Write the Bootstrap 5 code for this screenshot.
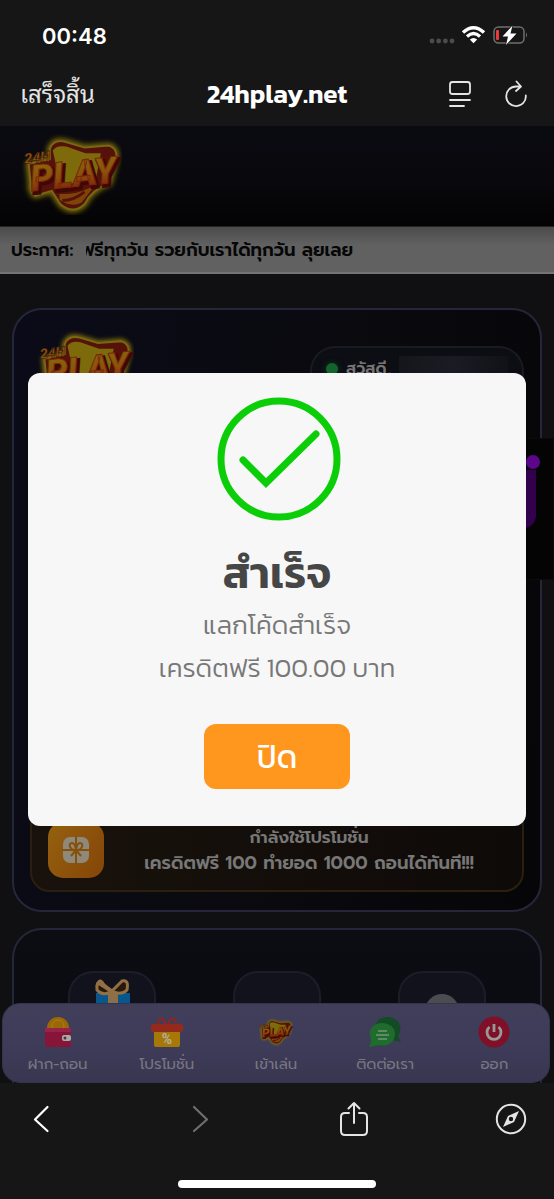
<!DOCTYPE html>
<html lang="th">
<head>
<meta charset="utf-8">
<meta name="viewport" content="width=device-width, initial-scale=1">
<title>24hplay.net</title>
<link href="https://cdn.jsdelivr.net/npm/bootstrap@5.3.0/dist/css/bootstrap.min.css" rel="stylesheet">
<style>
body{background:#161616;color:#fff;font-family:Prompt,Kanit,"Noto Sans Thai","Noto Sans",sans-serif;font-size:18px;line-height:26px}
button{font-family:inherit}
.plain-btn{background:none;border:0;padding:0;color:#e4e4e4;line-height:1}
.clock{font:600 22px/28px Inter,sans-serif}
.status-bar{padding:22px 26px 0 42px;height:62px}
.url-bar{padding:0 26px 0 20px;height:64px}
.url-tools{gap:28px}
.done-btn{font-family:"Noto Sans Thai Looped",Sarabun,"Noto Serif Thai",Loma,Waree,sans-serif;font-size:24px;line-height:32px;padding-bottom:4px}
.site-name{font-family:Kanit,Prompt,sans-serif;font-size:26px;line-height:32px;font-weight:600}
.site{background:#101012;min-height:0}
.site-head{height:100px;padding:8px 22px;background:linear-gradient(#0a0a11,#08080c 60%,#030304)}
.news{height:48px;padding:0 11px;gap:13px;background:linear-gradient(#4b4b4b,#616161 40%,#616161);border-top:1px solid #222;border-bottom:2px solid #747474;color:#060606;font-weight:600;overflow:hidden;white-space:nowrap}
.news-run{text-indent:-6px}
.panels{gap:16px;padding-top:34px}
.panel-box{border:2px solid #26263a;border-radius:30px}
.account{min-height:604px;padding:20px 16px 18px;background:linear-gradient(100deg,#0a0b18,#0a0a10 45%,#060608)}
.games{flex:0 0 300px;padding:41px 54px;background:linear-gradient(#0c0c13,#08080f)}
.greet{width:214px;height:44px;margin-top:16px;padding:0 14px;border:2px solid #1a1a22;border-bottom:0;border-radius:25px 25px 0 0;background:#0d0d14;color:#767676;font-weight:600;font-size:16px}
.online{width:12px;height:12px;border-radius:50%;background:#15642f;box-shadow:0 0 6px #0c3d1d}
.masked{height:26px;background:linear-gradient(90deg,#15151c,#1b1b23 50%,#111118)}
.promo{padding:14px 16px 12px;border:2px solid #2b1f10;border-radius:20px;background:linear-gradient(90deg,#19120c,#0e0a08);color:#777}
.promo-icon{width:56px;height:56px;border-radius:15px;background:linear-gradient(120deg,#95610f,#854508)}
.promo strong{font-size:17px;font-weight:600}
.tile{width:88px;height:88px;border:2px solid #1d1d2a;border-radius:25px;background:#12121c;overflow:hidden}
.contact-tab{right:0;top:312px;width:32px;height:142px;background:#040405;border:1px solid #0b0b0c}
.tabs{left:2px;right:4px;bottom:0;height:80px;border:1px solid #35344d;border-radius:18px;background:linear-gradient(#403e59,#3e3c59 50%,#383650);font-size:15px;line-height:20px}
.tabs a{color:#777681;text-decoration:none;padding-top:12px;gap:6px}
.dialog-layer{padding:0 28px 10px;z-index:5}
.dialog-box{font-family:Kanit,Prompt,sans-serif;background:#f7f7f7;border-radius:12px;padding:24px 24px 37px}
.dialog-box h1{font-size:44px;line-height:60px;color:#464646;font-weight:600;margin:22px 0 0}
.dialog-box p{font-size:26px;line-height:43px;color:#777;font-weight:300;margin:0}
.close-btn{width:146px;height:65px;margin-top:35px;border:0;border-radius:12px;background:#ff961d;color:#fff;font-size:32px;line-height:40px}
.browser-bar{height:116px;padding:18px 0 11px}
.browser-tools{padding:0 26px 0 32px}
.home-line{width:198px;height:8px;border-radius:4px;background:#fff}
svg{display:block;flex:none}
</style>
</head>
<body class="vh-100 d-flex flex-column overflow-hidden">
<svg width="0" height="0" class="position-absolute" aria-hidden="true">
<defs>
<filter id="glow" x="-20%" y="-20%" width="140%" height="140%"><feGaussianBlur stdDeviation="2.5"/></filter>
<linearGradient id="gold" x2="0" y2="1"><stop stop-color="#83700b"/><stop offset=".55" stop-color="#8a500b"/><stop offset="1" stop-color="#721309"/></linearGradient>
<symbol id="logo" viewBox="0 0 104 84">
<path d="M29 15Q33 5 45 8L65 14L90 12Q101 15 97 29L91 51Q72 58 65 73Q53 84 40 73L31 59L14 64Q8 61 9 51L7 31L29 26Z" fill="none" stroke="#7d6b0c" stroke-width="6" filter="url(#glow)"/>
<path d="M29 15Q33 5 45 8L65 14L90 12Q101 15 97 29L91 51Q72 58 65 73Q53 84 40 73L31 59L14 64Q8 61 9 51L7 31L29 26Z" fill="#56120a" stroke="#77690f" stroke-width="2"/>
<path d="M32 17Q36 11 46 13L66 20L82 20L76 51L40 53Z" fill="#7d6b0b"/>
<path d="M39 62Q55 64 77 52L62 71Q51 77 39 68Z" fill="#7c4509"/>
<path d="M42 69Q54 69 65 60M38 60Q57 64 78 49" fill="none" stroke="#5a1108" stroke-width="3"/>
<g font-family="Roboto,sans-serif" font-weight="900" font-style="italic" transform="rotate(-6 50 40)">
<text x="10" y="58" font-size="38" fill="#400707" stroke="#400707" stroke-width="3">PLAY</text>
<text x="8" y="55" font-size="38" fill="url(#gold)" stroke="#7d250a">PLAY</text>
<text x="4" y="26" font-size="15" fill="#8a510f" stroke="#35100a" stroke-width=".5">24H</text>
</g>
</symbol>
</defs>
</svg>

<header class="flex-shrink-0">
<div class="status-bar d-flex justify-content-between">
<span class="clock">00:48</span>
<svg width="100" height="28" viewBox="0 0 100 28">
<g fill="#4c4c4c"><circle cx="4" cy="19" r="2.4"/><circle cx="10.700" cy="19" r="2.400"/><circle cx="17.400" cy="19" r="2.400"/><circle cx="24" cy="19" r="2.400"/></g>
<g fill="none" stroke="#fff" stroke-width="3.400"><path d="M35 10.500Q45.500 1 56 10.500"/><path d="M39 14.500Q45.500 8.500 52 14.500"/></g><path d="M41.800 17.500Q45.500 14.500 49.200 17.500L45.500 21.300Z" fill="#fff"/>
<rect x="66" y="5" width="30" height="16" rx="4.500" fill="none" stroke="#6f6f6f" stroke-width="1.500"/><path d="M98 10.500q2 2.500 0 5" fill="#6f6f6f"/><rect x="68" y="8" width="3" height="10" rx="1" fill="#e8393b"/><path d="M84.500 3.500L74.500 14.500H80L78 23L88.500 11.500H82.500Z" fill="#fff" stroke="#161616" stroke-width="1.500" paint-order="stroke"/>
</svg>
</div>
<div class="url-bar d-flex align-items-center position-relative">
<button class="plain-btn done-btn">เสร็จสิ้น</button>
<strong class="site-name position-absolute start-50 top-50 translate-middle">24hplay.net</strong>
<div class="url-tools ms-auto d-flex">
<button class="plain-btn" aria-label="มุมมองหน้า"><svg width="32" height="30" viewBox="0 0 32 30" fill="none" stroke="currentColor" stroke-width="1.800" stroke-linecap="round"><rect x="6" y="3" width="20" height="12" rx="2.500"/><path d="M6 21H26M6 27H20"/></svg></button>
<button class="plain-btn" aria-label="โหลดใหม่"><svg width="24" height="30" viewBox="0 0 24 30" fill="none" stroke="currentColor" stroke-width="1.800" stroke-linecap="round" stroke-linejoin="round"><path d="M21.800 16.500A9.800 9.800 0 1 1 12 7.500H16.500M12.500 2.500L17 7.500L12 12"/></svg></button>
</div>
</div>
</header>

<main class="site flex-fill position-relative overflow-hidden d-flex flex-column">
<div class="site-head flex-shrink-0"><svg width="100" height="81"><use href="#logo"/></svg></div>
<div class="news d-flex align-items-center flex-shrink-0"><span>ประกาศ:</span><div class="news-run flex-fill overflow-hidden">ฟรีทุกวัน รวยกับเราได้ทุกวัน ลุยเลย</div></div>
<div class="panels d-flex flex-column px-2 mx-1">
<section class="panel-box account d-flex flex-column flex-shrink-0">
<div class="d-flex justify-content-between align-items-start">
<svg class="ms-2" width="96" height="78"><use href="#logo"/></svg>
<div class="greet d-flex align-items-center gap-2"><span class="online"></span><span>สวัสดี,</span><span class="masked flex-fill"></span></div>
</div>
<div class="promo mt-auto d-flex align-items-center">
<span class="promo-icon d-flex align-items-center justify-content-center"><svg width="28" height="28" viewBox="0 0 28 28"><rect x="1" y="1" width="26" height="26" rx="7" fill="#8f897b"/><g fill="none" stroke="#855009" stroke-width="2"><path d="M14 0V28M0 14H28M14 14C7 14 6 7 10 7Q13 7 14 14ZM14 14C21 14 22 7 18 7Q15 7 14 14ZM14 14L9 20M14 14L19 20"/></g></svg></span>
<div class="flex-fill text-center ps-2"><strong class="d-block">กำลังใช้โปรโมชั่น</strong><span class="fw-semibold">เครดิตฟรี 100 ทำยอด 1000 ถอนได้ทันที!!!</span></div>
</div>
</section>
<section class="panel-box games d-flex justify-content-between align-items-start">
<div class="tile"><svg width="84" height="48" viewBox="0 0 84 48"><path d="M26 20H60V48H26Z" fill="#07578c"/><path d="M38 18H48V48H38Z" fill="#8b7047"/><path d="M42 19L28 10Q30 5 34 12L42 18L52 8Q59 6 57 17Q51 23 42 18Q33 24 27 17Q26 8 31 9Z" fill="#29190c" stroke="#937044" stroke-width="3"/></svg></div>
<div class="tile"></div>
<div class="tile"><svg width="84" height="48" viewBox="0 0 84 48"><circle cx="42" cy="38" r="17" fill="#4c4c50"/></svg></div>
</section>
</div>
<div class="contact-tab position-absolute"><svg width="30" height="110" viewBox="0 0 30 110"><path d="M0 31H13V78Q12 87 0 90Z" fill="#32004c"/><circle cx="10" cy="23" r="7" fill="#5b068b"/></svg></div>

<nav class="tabs position-absolute d-flex">
<a href="#" class="flex-fill d-flex flex-column align-items-center w-100"><svg width="32" height="32" viewBox="0 0 32 32"><circle cx="16" cy="12" r="11" fill="#9b6807"/><circle cx="16" cy="10" r="6" fill="none" stroke="#ad8111"/><path d="M3 12H27L29 15V31H5Q3 31 3 28Z" fill="#861538"/><path d="M3 12H29V16H3Z" fill="#98224a"/><rect x="20" y="19" width="9" height="6" rx="2" fill="#aaa"/><circle cx="23" cy="22" r="1.500" fill="#57303f"/></svg>ฝาก-ถอน</a>
<a href="#" class="flex-fill d-flex flex-column align-items-center w-100"><svg width="32" height="32" viewBox="0 0 32 32"><path d="M15 9Q4 11 8 4Q12-1 15 9ZM17 9Q28 11 24 4Q20-1 17 9Z" fill="none" stroke="#912521" stroke-width="2"/><path d="M3 15H29V29Q29 31 27 31H5Q3 31 3 29Z" fill="#a67907"/><rect y="8" width="32" height="8" rx="2" fill="#942a1c"/><text x="16" y="28" text-anchor="middle" font-family="Roboto" font-size="14" font-weight="700" fill="#b5aea0">%</text></svg>โปรโมชั่น</a>
<a href="#" class="flex-fill d-flex flex-column align-items-center w-100"><svg width="34" height="32"><use href="#logo"/></svg>เข้าเล่น</a>
<a href="#" class="flex-fill d-flex flex-column align-items-center w-100"><svg width="32" height="32" viewBox="0 0 32 32"><path d="M19 1C9 1 6 7 7 13C8 22 17 26 23 24L32 26L29 20C35 11 29 1 19 1Z" fill="#124b25"/><path d="M13 7C5 7 0 12 1 19C1 22 3 24 2 26L0 31L10 29C20 31 26 25 26 18C26 11 20 7 13 7Z" fill="#1f6d2c"/><path d="M9 15H18M7 19H20M9 23H18" stroke="#78927c" stroke-width="1.500"/></svg>ติดต่อเรา</a>
<a href="#" class="flex-fill d-flex flex-column align-items-center w-100"><svg width="32" height="32" viewBox="0 0 32 32"><circle cx="16" cy="16" r="15.500" fill="#7f1028"/><path d="M11.500 11A7 7 0 1 0 20.500 11M16 8V16" fill="none" stroke="#999" stroke-width="2.800"/></svg>ออก</a>
</nav>

<div class="dialog-layer position-absolute top-0 start-0 w-100 h-100 d-flex align-items-center">
<section class="dialog-box w-100 text-center" role="dialog" aria-modal="true" aria-labelledby="result-title">
<svg class="mx-auto" width="128" height="124" viewBox="-4 0 128 124" fill="none" stroke="#0bce08" stroke-width="7"><circle cx="62" cy="62" r="58"/><path d="M26 63L49 86L99 37" stroke-linecap="round"/></svg>
<h1 id="result-title">สำเร็จ</h1>
<p>แลกโค้ดสำเร็จ</p>
<p>เครดิตฟรี 100.00 บาท</p>
<button class="close-btn">ปิด</button>
</section>
</div>
</main>

<footer class="browser-bar flex-shrink-0 d-flex flex-column justify-content-between align-items-center">
<div class="browser-tools d-flex justify-content-between align-items-center w-100">
<button class="plain-btn" aria-label="ย้อนกลับ"><svg width="18" height="36" viewBox="0 0 18 36" fill="none" stroke="#fff" stroke-width="2.200" stroke-linecap="round" stroke-linejoin="round"><path d="M15.500 6L3 18.500L15.500 30"/></svg></button>
<button class="plain-btn ms-3" aria-label="ไปข้างหน้า"><svg width="18" height="36" viewBox="0 0 18 36" fill="none" stroke="#6f6f6f" stroke-width="2.200" stroke-linecap="round" stroke-linejoin="round"><path d="M3 6L16 18.500L3 30"/></svg></button>
<button class="plain-btn ms-1" aria-label="แชร์"><svg width="30" height="36" viewBox="0 0 30 36" fill="none" stroke="currentColor" stroke-width="2" stroke-linecap="round" stroke-linejoin="round"><path d="M10 12H6Q2 12 2 16V30Q2 34 6 34H24Q28 34 28 30V16Q28 12 24 12H20M15 22V2M9.500 7.500L15 2L20.500 7.500"/></svg></button>
<button class="plain-btn" aria-label="เปิดในเบราว์เซอร์"><svg width="34" height="36" viewBox="0 0 34 36"><circle cx="17" cy="18" r="14.200" fill="none" stroke="currentColor" stroke-width="2"/><path fill="currentColor" fill-rule="evenodd" d="M25 10L20 21L9 26L14 15ZM17 15.800A2.200 2.200 0 1 0 17 20.200A2.200 2.200 0 1 0 17 15.800Z"/></svg></button>
</div>
<div class="home-line"></div>
</footer>
<script src="https://cdn.jsdelivr.net/npm/bootstrap@5.3.0/dist/js/bootstrap.bundle.min.js"></script>
</body>
</html>
